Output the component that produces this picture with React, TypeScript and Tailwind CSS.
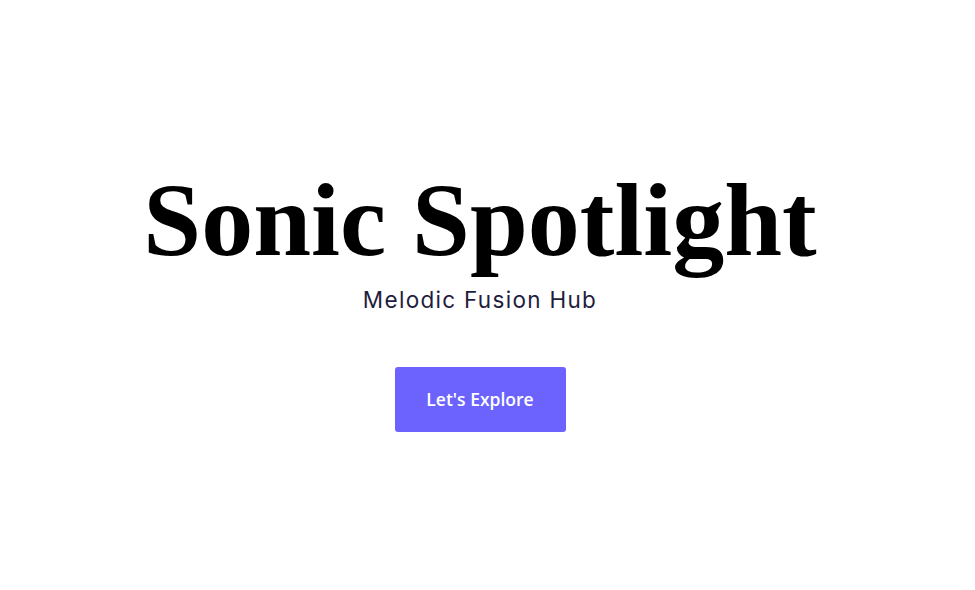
const App = () => {
  return (
    <div className="flex h-[590px] w-[960px] flex-col items-center bg-white pt-[160px]">
      {/* HERO */}
      <h1 className="font-['Liberation_Serif',serif] text-[104px] font-bold leading-[120px] text-black">
        Sonic Spotlight
      </h1>
      <p className="mt-[5px] font-['Inter',sans-serif] text-[22.5px] leading-[30px] tracking-[1.3px] text-[#1f1d3d]">
        Melodic Fusion Hub
      </p>
      <button className="mt-[52px] h-[65px] w-[171px] rounded-[3px] bg-[#6c63ff] font-['Open_Sans',sans-serif] text-[17.5px] font-semibold text-white">
        Let's Explore
      </button>
    </div>
  );
};

export default App;
